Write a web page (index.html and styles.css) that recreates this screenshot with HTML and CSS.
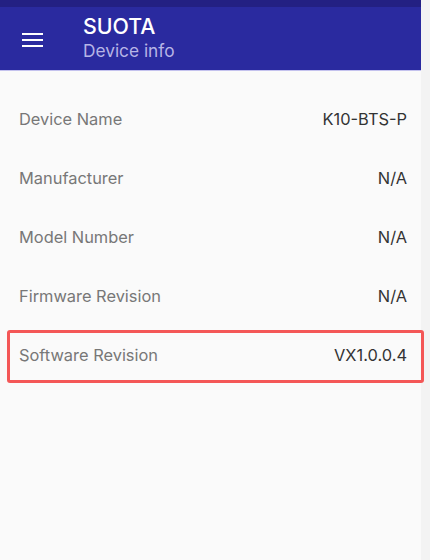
FILE: index.html
```html
<!DOCTYPE html>
<html>
<head>
<meta charset="utf-8">
<link rel="stylesheet" href="styles.css">
</head>
<body>
<div class="screen">
  <div class="app">
    <div class="status"></div>
    <header class="toolbar">
      <div class="menu">
        <svg width="22" height="16" viewBox="0 0 22 16"><rect x="0" y="1" width="21" height="2" fill="#fff"/><rect x="0" y="7" width="21" height="2" fill="#fff"/><rect x="0" y="13" width="21" height="2" fill="#fff"/></svg>
      </div>
      <div class="titles">
        <div class="title">SUOTA</div>
        <div class="subtitle">Device info</div>
      </div>
    </header>
    <div class="divider"></div>
    <main class="list">
      <div class="row"><span class="label">Device Name</span><span class="value">K10-BTS-P</span></div>
      <div class="row"><span class="label">Manufacturer</span><span class="value">N/A</span></div>
      <div class="row"><span class="label">Model Number</span><span class="value">N/A</span></div>
      <div class="row"><span class="label">Firmware Revision</span><span class="value">N/A</span></div>
      <div class="row highlighted"><span class="label">Software Revision</span><span class="value">VX1.0.0.4</span><div class="mark"></div></div>
    </main>
  </div>
  <div class="edge"></div>
</div>
</body>
</html>
```
FILE: styles.css
```css
html, body {
  margin: 0;
  padding: 0;
  background: #fafafa;
  font-family: Inter, Roboto, sans-serif;
}
.screen {
  display: flex;
  width: 430px;
  height: 560px;
}
.app {
  width: 421px;
  background: #fafafa;
}
.edge {
  flex: 1;
  background: #f3f3f3;
}
.status {
  height: 7px;
  background: #232083;
}
.toolbar {
  height: 63px;
  background: #2a2a9f;
  display: flex;
  align-items: center;
}
.menu {
  width: 83px;
  padding-left: 22px;
  box-sizing: border-box;
  display: flex;
  align-items: center;
  padding-top: 2px;
}
.menu svg { display: block; }
.titles {
  display: flex;
  flex-direction: column;
}
.title {
  color: #ffffff;
  font-size: 21.3px;
  line-height: 25px;
  font-weight: 500;
}
.subtitle {
  color: #b7b5e6;
  font-size: 17.3px;
  line-height: 24px;
}
.divider {
  height: 1px;
  background: #c4c2ee;
}
.list {
  padding-top: 18.5px;
}
.row {
  position: relative;
  height: 59px;
  display: flex;
  align-items: center;
  justify-content: space-between;
  padding: 0 14px 0 19px;
  font-size: 16.4px;
}
.label { color: #777777; }
.value { color: #333333; }
.mark {
  position: absolute;
  left: 7px;
  right: -3px;
  top: 4.5px;
  height: 53px;
  box-sizing: border-box;
  border: 3px solid #f45757;
  border-radius: 3px;
}
```
